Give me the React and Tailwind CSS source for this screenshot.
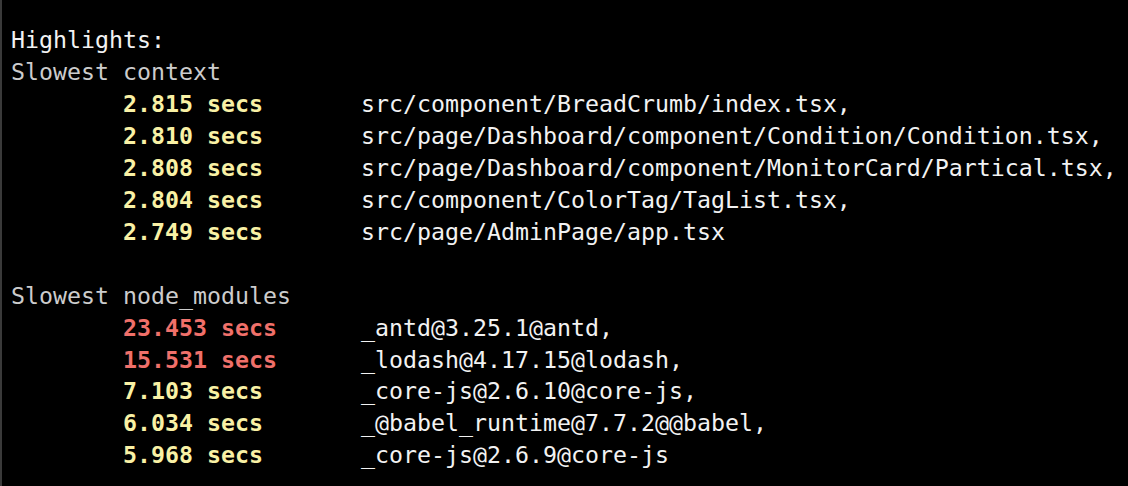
import React from 'react';

const contextRows = [
  { time: '2.815 secs', file: 'src/component/BreadCrumb/index.tsx,' },
  { time: '2.810 secs', file: 'src/page/Dashboard/component/Condition/Condition.tsx,' },
  { time: '2.808 secs', file: 'src/page/Dashboard/component/MonitorCard/Partical.tsx,' },
  { time: '2.804 secs', file: 'src/component/ColorTag/TagList.tsx,' },
  { time: '2.749 secs', file: 'src/page/AdminPage/app.tsx' },
];

const moduleRows = [
  { time: '23.453 secs', file: '_antd@3.25.1@antd,', slow: true },
  { time: '15.531 secs', file: '_lodash@4.17.15@lodash,', slow: true },
  { time: '7.103 secs', file: '_core-js@2.6.10@core-js,' },
  { time: '6.034 secs', file: '_@babel_runtime@7.7.2@@babel,' },
  { time: '5.968 secs', file: '_core-js@2.6.9@core-js' },
];

function Row({ time, file, slow }) {
  return (
    <div className="whitespace-pre">
      {'        '}
      <span className={`font-semibold ${slow ? 'text-[#f0706a]' : 'text-[#f9f1a5]'}`}>{time}</span>
      {' '.repeat(17 - time.length)}
      <span className="text-[#f2f2f2]">{file}</span>
    </div>
  );
}

export default function App() {
  return (
    <div className="w-[1128px] h-[486px] bg-black border-l-2 border-[#3a3a3a] overflow-hidden">
      <div className="pt-[24px] pl-[9px] text-[23.25px] leading-[31.95px] font-['DejaVu_Sans_Mono',monospace] text-[#cccccc]">
        <div className="text-[#f2f2f2]">Highlights:</div>
        <div>Slowest context</div>
        {contextRows.map((r, i) => (
          <Row key={i} {...r} />
        ))}
        <div>&nbsp;</div>
        <div>Slowest node_modules</div>
        {moduleRows.map((r, i) => (
          <Row key={i} {...r} />
        ))}
      </div>
    </div>
  );
}
